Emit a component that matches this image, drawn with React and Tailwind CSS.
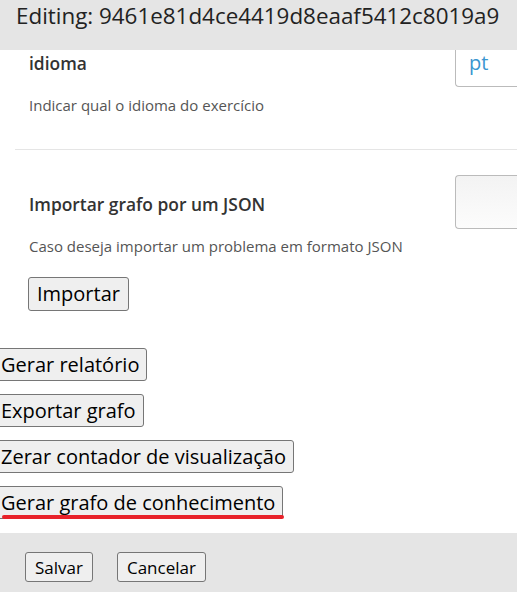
import React from 'react';

const font = { fontFamily: '"Open Sans", "Liberation Sans", sans-serif' };

const Btn = ({ children, className = '' }) => (
  <button
    className={`bg-[#efefef] border border-[#767676] rounded-[3px] text-black leading-none whitespace-nowrap ${className}`}
  >
    {children}
  </button>
);

export default function App() {
  return (
    <div className="w-[517px] h-[592px] overflow-hidden bg-white flex flex-col" style={font}>
      {/* header */}
      <div className="h-[50px] shrink-0 bg-[#e5e5e5] pl-[16px] pt-[1px] relative z-10">
        <h1 className="text-[22.4px] text-[#222] leading-[30px] whitespace-nowrap">
          Editing: 9461e81d4ce4419d8eaaf5412c8019a9
        </h1>
      </div>

      {/* body */}
      <div className="flex-1 flex flex-col">
        <div className="ml-[15px] border-b border-[#e5e5e5] h-[100px] flex justify-between">
          <div className="pl-[14px] pt-[1px]">
            <p className="text-[17.4px] font-semibold text-[#333] leading-[24px]">idioma</p>
            <p className="text-[15px] text-[#555] leading-[20px] mt-[20px]">Indicar qual o idioma do exercício</p>
          </div>
          <div className="w-[62px] h-[37px] border border-[#bbb] border-t-0 border-r-0 rounded-bl-[4px] bg-white pl-[13px]">
            <span className="text-[20px] text-[#3a96d0] leading-[26px]">pt</span>
          </div>
        </div>

        <div className="ml-[15px] flex justify-between">
          <div className="pl-[14px] pt-[42px] flex flex-col items-start">
            <p className="text-[17.4px] font-semibold text-[#333] leading-[24px]">Importar grafo por um JSON</p>
            <p className="text-[15px] text-[#555] leading-[20px] mt-[20px]">Caso deseja importar um problema em formato JSON</p>
            <Btn className="mt-[21px] h-[34px] px-[8px] text-[20px] -ml-px">Importar</Btn>
          </div>
          <div className="mt-[25px] w-[62px] h-[54px] border border-[#bbb] border-r-0 rounded-l-[4px] bg-gradient-to-b from-[#f3f3f3] to-[#fcfcfc]" />
        </div>

        <div className="flex flex-col items-start gap-[13px] mt-[37px] -ml-[8px]">
          <Btn className="h-[33px] pl-[8px] pr-[7px] text-[20px]">Gerar relatório</Btn>
          <Btn className="h-[33px] pl-[8px] pr-[7px] text-[20px]">Exportar grafo</Btn>
          <Btn className="h-[33px] pl-[8px] pr-[7px] text-[20px]">Zerar contador de visualização</Btn>
          <div className="relative">
            <Btn className="h-[33px] pl-[8px] pr-[7px] text-[20px]">Gerar grafo de conhecimento</Btn>
            <div className="absolute left-[10px] -right-[1px] bottom-0 h-[4px] bg-[#e8222a] rounded-full" />
          </div>
        </div>
      </div>

      {/* footer */}
      <div className="h-[59px] shrink-0 bg-[#e5e5e5] flex items-start gap-[24px] pl-[25px] pt-[19px]">
        <Btn className="h-[30px] px-[9px] text-[17px]">Salvar</Btn>
        <Btn className="h-[30px] px-[9px] text-[17px]">Cancelar</Btn>
      </div>
    </div>
  );
}
